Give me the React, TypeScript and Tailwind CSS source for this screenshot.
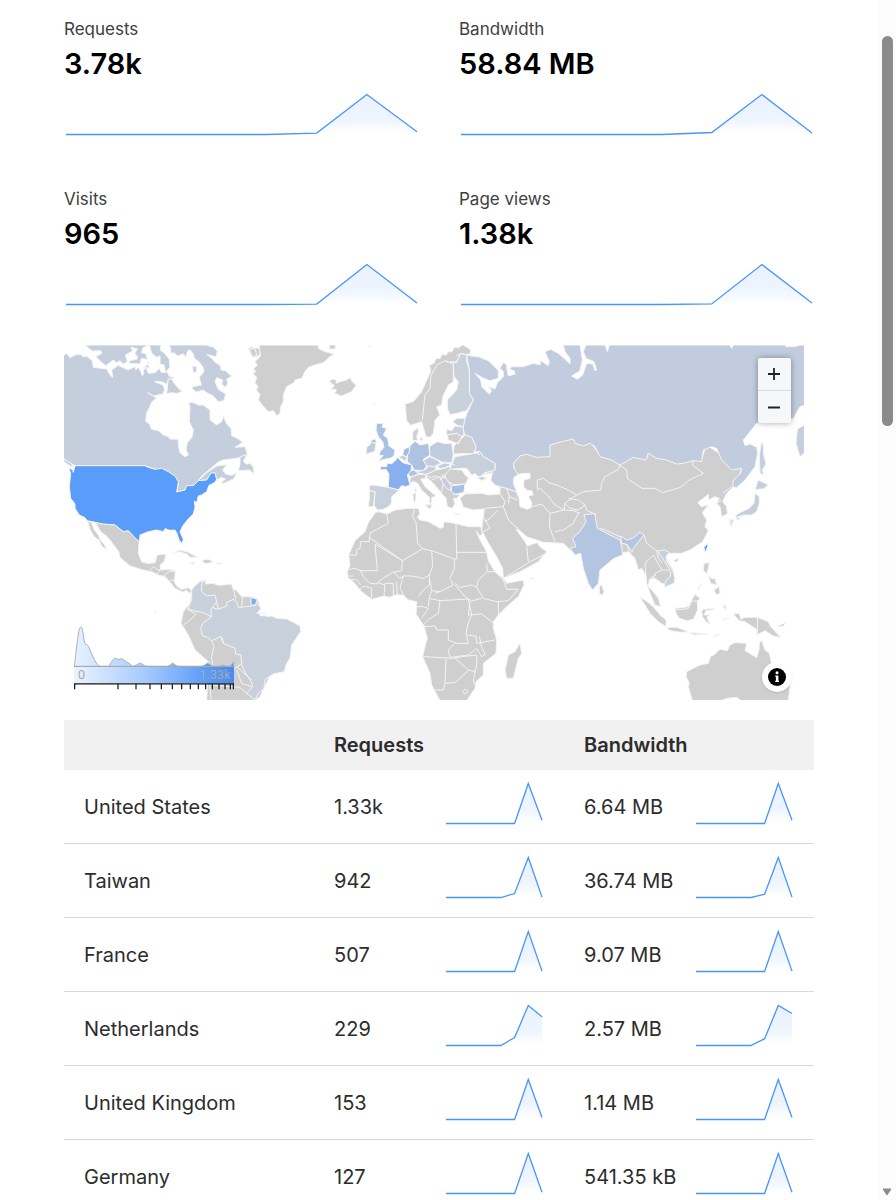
import React from "react";

type Series = number[];

function Sparkline({ id, data, width, label }: { id: string; data: Series; width: number; label: string }) {
  const step = (width - 4) / (data.length - 1);
  const pts = data.map((v, i) => `${(2 + i * step).toFixed(1)},${(42.5 - v * 40).toFixed(1)}`).join(" ");
  return (
    <svg viewBox={`0 0 ${width} 44`} className="block h-11 w-full" preserveAspectRatio="none" role="img" aria-label={label}>
      <defs>
        <linearGradient id={id} x1="0" y1="2" x2="0" y2="42" gradientUnits="userSpaceOnUse">
          <stop offset="0" stopColor="#4693ff" stopOpacity="0.12" />
          <stop offset="0.6" stopColor="#4693ff" stopOpacity="0.1" />
          <stop offset="1" stopColor="#4693ff" stopOpacity="0" />
        </linearGradient>
      </defs>
      <polygon points={`2,42.5 ${pts} ${width - 2},42.5`} fill={`url(#${id})`} />
      <polyline points={pts} fill="none" stroke="#4a95f8" strokeWidth="1.3" />
    </svg>
  );
}

const stats: { label: string; value: string; data: Series }[] = [
  { label: "Requests", value: "3.78k", data: [0, 0, 0, 0, 0, 0.035, 1, 0.07] },
  { label: "Bandwidth", value: "58.84 MB", data: [0, 0, 0, 0, 0, 0.05, 1, 0.04] },
  { label: "Visits", value: "965", data: [0, 0, 0, 0, 0, 0.01, 1, 0.04] },
  { label: "Page views", value: "1.38k", data: [0, 0, 0, 0, 0, 0.015, 1, 0.04] },
];

const rows: { country: string; requests: string; r: Series; bandwidth: string; b: Series }[] = [
  { country: "United States", requests: "1.33k", r: [0, 0, 0, 0, 0, 0, 1, 0.08], bandwidth: "6.64 MB", b: [0, 0, 0, 0, 0, 0, 1, 0.08] },
  { country: "Taiwan", requests: "942", r: [0, 0, 0, 0, 0, 0.1, 1, 0.01], bandwidth: "36.74 MB", b: [0, 0, 0, 0, 0, 0.08, 1, 0.01] },
  { country: "France", requests: "507", r: [0, 0, 0, 0, 0, 0, 1, 0.01], bandwidth: "9.07 MB", b: [0, 0, 0, 0, 0, 0, 1, 0.01] },
  { country: "Netherlands", requests: "229", r: [0, 0, 0, 0, 0, 0.2, 1, 0.72], bandwidth: "2.57 MB", b: [0, 0, 0, 0, 0, 0.17, 1, 0.8] },
  { country: "United Kingdom", requests: "153", r: [0, 0, 0, 0, 0, 0, 1, 0.05], bandwidth: "1.14 MB", b: [0, 0, 0, 0, 0, 0, 1, 0.05] },
  { country: "Germany", requests: "127", r: [0, 0, 0, 0, 0, 0, 1, 0.03], bandwidth: "541.35 kB", b: [0, 0, 0, 0, 0, 0, 1, 0.03] },
];

type Shape = [fill: string, d: string];
type Region = { x: number; y: number; shapes: Shape[]; borders?: string };

const GREY = "#cfcfcf";
const CANADA = "#c5cedd";
const RUSSIA = "#c1ccde";
const PALE = "#c8d0dc";
const SEA = "#ffffff";

// Map units are thirds of a pixel; each region has its own origin.
const regions: Region[] = [
  {
    x: 0,
    y: 0,
    shapes: [
      [CANADA, "M5 50L20 40 30 53 45 45 62 43 68 50 82 50 97 62 100 82 122 85 140 87 145 97 152 107 158 112 155 90 175 76 195 86 205 89 225 80 228 90 233 82 237 85 242 95 247 107 252 100 250 92 258 82 265 100 285 98 298 85 305 98 322 95 328 110 345 112 322 122 324 133 303 125 282 124 310 136 314 150 308 162 280 168 262 158 290 174 275 186 270 200 260 218 257 244 270 254 274 268 295 272 310 285 325 290 330 297 355 298 355 315 360 338 375 350 385 345 378 328 382 308 397 290 400 270 388 245 390 200 385 188 400 188 415 195 430 195 450 210 450 240 470 255 485 245 490 228 500 252 513 265 515 287 535 297 548 307 525 322 555 320 562 342 555 350 530 355 490 360 475 366 455 383 425 408 415 422 440 398 470 378 500 374 488 390 497 402 515 406 530 398 522 416 492 430 482 428 497 417 483 412 471 420 462 396 440 420 415 422 400 437 380 437 375 450 352 457 355 425 340 405 310 388 285 388 255 377 45 377 12 360 5 350Z"],
      [CANADA, "M80 15L82 22 97 33 122 32 125 40 108 50 120 63 137 77 160 60 170 68 180 62 190 72 202 65 196 45 218 33 213 22 232 26 224 40 233 50 230 58 208 62 208 70 240 72 244 55 260 58 268 72 250 82 268 84 258 42 245 38 248 24 265 15Z"],
      [CANADA, "M268 15L275 40 290 52 300 48 300 72 312 75 317 98 330 80 328 58 312 38 300 30 303 15Z"],
      [CANADA, "M328 15L333 30 330 38 345 40 352 48 370 42 378 50 383 32 390 30 400 42 403 55 418 66 430 83 432 95 418 112 424 135 397 140 398 148 410 156 430 150 440 158 460 168 475 185 492 182 497 162 475 148 465 125 470 113 488 120 485 133 496 142 503 130 500 118 515 108 498 93 484 90 480 75 466 68 455 55 440 43 468 50 472 35 462 22 438 15Z"],
      [CANADA, "M397 80L410 78 410 95 400 98ZM325 116L335 118 345 133 357 147 368 154 352 160 332 158 320 162ZM540 350L560 344 550 365 560 373 570 370 580 382 582 402 568 390 535 392 540 374ZM12 356L35 372 40 380 30 378 12 365ZM565 25l12 -5 8 10 -12 12Z"],
      ["#5a9cf9", "M26 384L38 389 40 397 45 377 255 377 262 381 285 388 305 385 325 395 345 408 355 425 350 456 375 450 380 437 400 437 415 422 440 420 453 400 465 398 470 420 460 430 447 436 440 455 425 465 415 468 410 488 403 483 405 500 400 522 382 540 368 558 360 575 370 598 366 610 358 602 350 578 345 570 330 571 315 566 310 575 290 570 265 575 240 585 238 605 225 595 205 573 190 575 165 555 130 553 82 542 75 533 58 525 45 505 45 492 32 475 28 440 32 400Z"],
      [GREY, "M570 30L585 22 600 28 600 45 582 52 572 45Z"],
    ],
  },
  {
    x: 0,
    y: 540,
    shapes: [
      [GREY, "M95 5L130 12 165 15 190 35 205 32 222 50 237 65 235 100 245 125 265 130 285 128 292 105 318 102 312 125 300 135 302 150 330 148 347 153 342 185 352 200 365 208 385 203 395 213 388 220 380 211 368 216 345 205 325 180 315 170 295 165 275 155 250 150 210 138 180 112 176 95 150 60 142 50 122 35 108 10Z"],
      [GREY, "M83 3L95 8 102 28 115 45 122 62 132 72 140 90 125 78 117 60 102 50 90 28Z"],
      [GREY, "M338 98L360 90 385 97 412 112 390 112 382 103 360 95ZM428 128L430 118 448 119 460 127 440 130ZM388 127l18 3 -8 3ZM470 129h16v3h-16Z"],
      [GREY, "M395 210L405 197 420 185 438 180 437 192 460 190 472 195 490 195 515 192 518 205 530 212 545 230 575 230 592 238 603 265 590 280 650 295 700 320 600 530 580 545 440 545 443 480 445 425 405 390 385 345 363 310 370 275 390 250Z"],
      [PALE, "M452 270L455 262 475 268 500 258 500 247 520 238 530 245 535 262 560 260 585 256 592 250 603 265 590 280 612 278 618 290 635 288 650 295 680 297 700 307 720 318 722 335 695 375 690 415 680 430 672 455 640 462 615 478 612 505 595 520 585 540 560 520 578 500 574 485 560 465 552 450 545 432 543 405 527 402 525 385 490 370 482 350 455 362 442 352 427 347 422 325 430 308 450 295Z"],
      [PALE, "M438 180L425 190 425 215 440 228 465 225 470 245 452 270 455 290 430 278 400 272 384 266 395 240 395 210 405 197 420 185Z"],
      ["#82aeee", "M573 232L592 238 586 255 573 255Z"],
      [SEA, "M597 279l18 -1 3 8 -16 2Z"],
      [PALE, "M284 275l4 2 -2 4Z"],
    ],
    borders:
      "M258 130L285 128M270 150L282 140 290 148 302 150M290 165L300 150M310 168L330 152 345 156M330 180L342 182M382 268L408 282 388 302 372 314M455 362L462 380 455 410 458 440 470 460M485 350L490 368M458 438L465 455 485 485 530 440 545 432M530 440L575 480M530 450L545 490 575 500M448 430L455 460 450 500 453 540M453 495L540 502 560 520M470 245L475 268M520 208L528 238M548 230L545 262",
  },
  {
    x: 540,
    y: 0,
    shapes: [
      [GREY, "M57 15L60 35 62 48 45 65 52 75 40 88 48 95 38 100 50 112 45 130 55 140 48 150 60 162 55 180 75 205 85 215 100 212 110 227 120 220 122 200 130 185 130 165 140 140 162 128 165 120 185 115 195 95 205 82 225 75 250 68 270 50 283 42 255 35 235 25 235 15Z"],
      [GREY, "M28 28L45 25 50 45 38 52ZM268 15h18v12h-18ZM268 124L275 118 290 120 288 130 300 125 320 120 330 113 337 125 348 136 335 155 305 168 283 160 290 150 272 146 284 138Z"],
      ["#a9c0e6", "M410 250L430 250 426 262 440 265 430 285 443 295 447 318 465 330 462 348 452 354 415 362 430 347 418 345 420 335 432 322 428 305 415 290 408 270ZM392 303L405 296 410 308 396 310Z"],
      ["#bdcbe0", "M380 322L392 312 393 307 408 310 404 334 378 343Z"],
      ["#88b0ee", "M420 380L440 380 442 370 455 371 468 360 472 352 488 368 515 375 513 392 502 405 510 435 497 440 485 437 475 450 445 442 447 402 438 388 423 390Z"],
      [PALE, "M388 437L400 435 445 442 478 450 455 470 455 488 445 500 430 508 412 510 402 495 405 455 388 452Z"],
      [GREY, "M388 452L405 455 400 500 385 500 388 478ZM475 352L490 345 500 352 498 364ZM518 300L518 275 533 264 535 275 530 290 533 302ZM540 293l8 0 0 10 -8 -4Z"],
      ["#9dbbe9", "M488 345L492 328 508 320 508 335 500 350Z"],
      ["#aec2e2", "M502 345L508 335 510 318 525 303 540 315 565 310 570 345 550 358 560 378 550 392 522 390 515 375 502 365Z"],
      ["#aec2e2", "M505 402L512 393 522 390 535 400 525 406 512 410Z"],
      ["#c1ccde", "M568 320L592 305 610 310 635 310 640 345 635 367 615 370 590 358 570 348Z"],
      ["#c4cede", "M550 362L570 350 592 360 602 370 582 380 560 378ZM590 378L612 370 630 370 628 378 602 386Z"],
      [PALE, "M530 395L555 390 565 378 588 380 585 395 558 403 535 399Z"],
      [GREY, "M510 413L535 403 557 404 557 415 542 418 555 440 572 455 588 468 575 473 575 490 568 488 568 472 545 450 533 430 520 424 510 432ZM555 495L575 492 573 505ZM519 462L528 458 527 483 520 484Z"],
      ["#69a5f5", "M524 447L529 447 527 457Z"],
      [GREY, "M557 404L588 390 602 388 628 380 645 400 645 430 640 462 660 465 650 475 640 475 645 490 637 505 622 500 618 475 605 460 580 430 560 412Z"],
      [GREY, "M495 192L520 185 545 155 558 125 572 95 569 75 582 70 588 55 600 56 606 42 618 46 626 34 636 36 642 22 655 24 668 14 684 24 692 30 690 42 660 45 650 70 640 72 640 125 625 135 608 170 605 195 590 200 600 225 585 240 580 280 570 292 558 290 545 245 530 250 512 256 500 242Z"],
      [GREY, "M385 20l8 -3 -5 5ZM400 190l5 2 -5 2Z"],
    ],
    borders:
      "M547 240L555 165 570 145 572 110 590 75 615 62 640 72M615 62L625 68 650 65 660 45M558 405L570 412 590 408 598 415M575 420L600 410 610 430 605 455M605 405L620 412 640 400",
  },
  {
    x: 840,
    y: 480,
    shapes: [
      [GREY, "M105 38L115 35 142 42 165 30 205 25 235 25 240 40 232 52 240 60 265 65 300 85 310 82 312 65 345 70 385 80 422 80 427 100 420 108 408 92 420 120 440 155 445 182 465 215 490 235 500 250 550 240 552 255 535 290 500 320 475 345 460 365 460 385 470 420 468 460 430 490 430 525 408 545 405 565 380 602 300 602 275 555 270 520 248 470 255 440 262 415 252 378 228 342 230 305 205 300 190 285 165 285 150 292 132 288 95 298 65 275 40 245 25 235 22 215 30 195 26 165 45 122 75 95 85 68Z"],
      [GREY, "M540 430L545 460 535 475 520 535 500 535 495 510 505 465 525 455Z"],
      [GREY, "M568 235h14v2h-14ZM340 40l20 0 -8 4ZM255 15l22 0 -8 12Z"],
    ],
    borders:
      "M140 42L145 70 92 98 88 112 187 182 248 146 233 130 228 68 218 50 222 28M88 112L88 125 62 125 60 145 50 148 50 165 26 165M105 132L112 212 60 212 45 205 28 208M105 132L187 182 185 212 158 217 115 245 112 252 90 250 70 230 62 212M248 146L275 152 278 200 268 225 250 235 215 228 190 228 180 235 160 217M275 152L343 177 343 205 330 235 340 255 300 275 275 272 268 232M348 72L350 157 438 157M350 157L350 177 343 177M440 190L442 215 415 240 410 262 395 255 360 262 345 250M442 215L465 215 490 240 500 268 535 268 505 302 470 305 430 295 410 262M475 345L475 305M345 255L375 290 395 303 425 295M390 303L385 345 425 342 462 370M275 272L268 295 300 302 385 297 395 345 385 368 378 400 385 430 350 430 325 420 325 390 290 390 285 378 252 380M300 302L295 340 270 355 250 375M230 320L248 320 265 325 245 355M268 295L265 320M378 405L408 408 410 430 465 420M418 410L425 440 435 465 425 470 410 445 385 465 330 472 325 450 345 430M250 470L340 475 365 470 410 465 410 495 405 515 385 510 345 475M318 475L315 550 345 548 385 512M405 515L400 545 405 555M315 550L310 570 285 570M190 285L180 265 190 228M172 285L170 245M160 285L160 250 135 250 132 288M115 248L135 255M95 295L95 265 72 258 58 270M28 238L50 240 62 255M40 228L25 228M268 225L268 255 245 275 235 290M368 575L375 567 384 575 376 583ZM300 275L285 280",
  },
  {
    x: 1140,
    y: 0,
    shapes: [
      [GREY, "M220 372L235 343 320 340 330 310 400 290 450 305 480 345 540 370 620 335 700 365 785 355 800 315 845 345 905 385 890 430 875 445 860 460 848 485 860 500 862 522 845 530 840 500 830 490 838 475 825 470 805 480 805 463 773 488 785 500 805 495 787 518 800 540 795 560 805 572 788 605 750 630 725 640 690 640 675 645 680 660 700 690 703 725 685 735 665 730 645 715 628 718 625 740 640 755 655 775 662 800 645 795 630 760 620 730 618 705 605 685 595 690 585 655 565 635 545 640 520 655 480 690 475 730 455 750 445 730 430 680 422 640 405 645 390 630 370 610 335 608 310 607 290 600 260 590 240 572 228 568 255 605 262 618 290 608 300 620 320 635 295 665 240 695 190 715 188 685 170 650 140 600 125 570 130 530 133 507 100 510 70 502 60 475 75 462 130 460 180 462 180 440 200 445 235 455Z"],
      [GREY, "M478 738L485 735 492 755 488 765 478 762Z"],
      [RUSSIA, "M80 45L95 48 115 50 145 62 175 92 175 115 150 122 125 112 105 100 122 120 125 140 148 162 155 152 145 140 165 147 172 128 190 110 190 95 180 85 190 68 198 72 205 108 225 102 222 92 208 88 215 80 250 80 280 70 300 75 302 62 325 77 328 65 315 35 332 28 355 40 372 55 390 72 390 55 375 35 370 15 420 15 427 60 420 92 395 108 412 118 428 105 440 70 458 72 465 92 470 90 462 65 438 55 430 35 438 15 495 15 502 35 508 15 1095 15 1095 195 1080 200 1060 235 950 250 910 300 915 317 930 312 950 322 953 340 945 380 915 420 890 443 878 440 880 420 902 400 905 385 875 390 845 360 830 325 815 320 790 330 785 365 760 362 730 370 710 372 680 360 650 355 625 340 618 360 580 352 540 375 515 360 480 350 465 320 450 310 430 318 405 310 400 297 365 305 330 315 330 350 290 352 260 343 240 348 220 370 222 385 235 405 220 430 235 458 200 445 180 440 150 430 155 410 135 400 165 390 165 370 130 350 120 335 105 335 108 320 95 292 75 285 68 265 75 235 80 222 100 180 88 160 88 90Z"],
      ["#c9d1db", "M62 40L80 45 80 65 88 90 88 160 100 180 80 212 50 220 30 224 22 205 22 180 50 150 55 125 42 110 40 70 30 65 50 68Z"],
      [PALE, "M38 245L50 235 75 235 70 260 52 256ZM20 285L20 268 35 272 45 258 70 262 72 285 62 290 50 280Z"],
      [GREY, "M22 285L50 280 65 290 55 312 25 300ZM40 342L42 318 60 300 75 285 95 292 108 320 103 340Z"],
      [PALE, "M30 385L45 350 75 345 105 340 120 335 130 350 165 370 165 390 135 398 120 410 95 405 80 385 62 385 32 388Z"],
      [GREY, "M15 405L30 387 65 390 78 408 85 412 78 432 40 434 20 422Z"],
      ["#a9c0e6", "M33 438L76 432 72 457 45 463 35 455Z"],
      ["#c4cede", "M2 415L15 412 34 438 30 452 15 440Z"],
      [SEA, "M72 455L75 435 88 412 105 400 118 418 140 412 130 405 158 398 150 418 165 435 180 445 175 462 145 465 120 458 95 460Z"],
      [PALE, "M112 412L128 410 140 414 125 422Z"],
      [SEA, "M220 430L222 412 238 402 255 400 270 400 270 415 252 420 250 438 262 452 275 452 280 464 265 468 275 488 275 502 262 508 240 500 238 478 230 455Z"],
      ["#b3c5e1", "M432 525L465 520 468 545 472 565 500 580 540 600 545 622 548 645 522 655 480 690 475 730 458 750 445 730 430 685 422 640 405 645 390 625 408 620 398 595 420 575 438 545Z"],
      ["#b3c5e1", "M542 588L560 600 578 595 600 577 612 585 595 605 580 625 577 635 567 622 558 612 545 610Z"],
      [PALE, "M652 633L675 630 688 638 678 650 680 665 698 690 705 715 702 730 672 742 678 722 692 708 690 690 668 655Z"],
    ],
    borders:
      "M80 45L62 40 48 48 M540 375L535 388 495 410 485 430 482 450 430 455 410 465 375 490 372 510 345 495 325 468 300 445 292 450 292 420 310 415 330 430 350 435 385 450 410 465M540 375L560 390 562 415 605 445 645 445 668 458 722 442 745 422 790 400 757 375 760 362M375 490L390 505 415 510 435 495 415 480 385 475M435 495L440 510 468 525M278 500L305 492 330 520 328 560 345 605M330 520L372 510 400 512 420 520M345 575L370 570 400 550 415 520M480 565L500 572 540 590M135 505L190 500 205 540 240 572M190 500L195 485 180 462M200 445L208 470 232 480M208 470L205 490M135 545L150 535 175 510M130 530L150 565 130 575M190 715L215 700 270 665 320 640M265 665L260 620M612 585L620 610 650 632M560 612L575 650M618 705L615 670 640 645 665 690 645 700 640 715M665 690L690 690M650 630L655 655 668 670M830 490L845 480M848 460L875 440M0 370L15 365 45 375M18 400L0 420M100 335L120 345",
  },
  {
    x: 1680,
    y: 0,
    shapes: [
      [CANADA, "M552 255L532 268 528 310 540 350 556 335 556 255ZM425 305L430 315 430 340 438 372 427 390 432 405 420 400 418 345ZM415 420L445 435 430 447 418 447 405 450ZM405 460L418 470 418 490 410 515 395 525 370 525 350 532 345 528 365 515 385 507 402 490ZM328 538L342 540 335 560 330 552ZM350 532l12 2 -10 8Z"],
      [SEA, "M327 12h15l-7 13ZM495 12h50l-20 8 -28 0Z"],
    ],
  },
  {
    x: 1740,
    y: 540,
    shapes: [
      ["#5a9cf9", "M192 82L203 70 203 80 196 98Z"],
      [PALE, "M270 0h10l-4 15Z"],
      [GREY, "M140 455L180 435 205 430 212 408 222 405 240 388 262 392 270 375 285 368 320 370 315 392 350 413 357 390 358 370 365 360 375 390 388 400 395 430 420 450 440 475 450 500 445 545 308 545 290 532 262 535 235 545 158 545 145 500 148 490 138 470Z"],
      [GREY, "M0 233L15 240 40 260 60 285 78 300 78 320 55 305 30 280 15 255ZM80 322L110 322 145 335 125 337 90 332ZM105 265L125 263 145 260 155 240 165 223 180 234 172 246 173 270 160 298 140 302 118 295 108 280ZM190 268L222 265 225 268 198 272 192 285 210 285 200 292 210 312 198 305 188 290 185 275ZM192 130L208 128 205 145 200 162 190 150ZM222 210L238 200 240 220 228 224ZM102 120L115 115 115 122 105 127ZM172 208l15 -20 -12 22ZM205 165l10 12 10 -2 5 20 -18 -5ZM280 282L298 280 302 298 315 292 352 292 385 305 392 320 422 352 400 348 375 332 350 345 350 328 315 305 298 302ZM412 318L438 308 428 320ZM220 352l20 -10 -15 3ZM148 338l30 2 25 2 -40 3ZM250 255l8 2 0 15 -5 -8ZM245 298l25 -4 -18 5Z"],
    ],
    borders: "M352 292V348M106 270L145 266 155 244 175 242M30 175L48 165",
  },
];

const ticks = [44, 174, 228, 270, 304, 337, 365, 391, 415, 437, 457, 477, 495, 511, 520];

function WorldMap() {
  return (
    <div className="relative w-full max-w-[740px]">
      <svg viewBox="12 15 2220 1065" className="block w-full" role="img" aria-label="Requests by country">
        <defs>
          <linearGradient id="scale" x1="0" x2="1">
            <stop offset="0" stopColor="#ebf3fe" />
            <stop offset="0.45" stopColor="#a4cafd" />
            <stop offset="0.8" stopColor="#5f9ff8" />
            <stop offset="1" stopColor="#478bf0" />
          </linearGradient>
          <linearGradient id="density" x1="42" x2="522" y1="0" y2="0" gradientUnits="userSpaceOnUse">
            <stop offset="0" stopColor="#e8f2ff" />
            <stop offset="0.45" stopColor="#a4cafd" />
            <stop offset="1" stopColor="#3f80df" />
          </linearGradient>
        </defs>
        {regions.map((r) => (
          <g key={`${r.x}-${r.y}`} transform={`translate(${r.x} ${r.y})`} strokeLinejoin="round">
            {r.shapes.map(([fill, d]) => (
              <path key={d} d={d} fill={fill} stroke="#f4f5f6" strokeWidth="3" />
            ))}
            {r.borders && <path d={r.borders} fill="none" stroke="#f4f4f4" strokeWidth="3" />}
          </g>
        ))}
        <g transform="translate(0 540)">
          <path
            d="M43 439C48 405 54 322 62 321S70 362 75 371Q82 373 86 380C95 404 110 438 121 439H145C152 434 157 415 167 415 175 420 180 418 186 416 193 420 200 428 208 430Q212 436 218 439 230 437 236 431 242 427 248 433 254 439 262 439H322Q332 436 338 429 345 436 354 439H425Q436 436 443 429 450 436 460 439H478L490 436 498 439H508Q516 437 521 425V439Z"
            fill="url(#density)"
            stroke="#a9b0ba"
            strokeWidth="3"
          />
          <rect x="42" y="439" width="480" height="50" fill="url(#scale)" />
          <path d="M42 439.500H522" stroke="#a9a9a9" strokeWidth="3" />
          <path d={`M42 491.500H522${ticks.map((t) => `M${t} 491V508`).join("")}`} stroke="#111" strokeWidth="3.600" fill="none" />
          <text x="54" y="477" fontSize="38" fill="#a9a9a9" className="font-['Roboto',sans-serif]">0</text>
          <text x="511" y="477" fontSize="38" textAnchor="end" fill="#a9a9a9" className="font-['Roboto',sans-serif]">1.33k</text>
        </g>
      </svg>
      <div className="absolute top-[13px] right-[13px] flex w-[33px] flex-col overflow-hidden rounded-xs bg-[#f6f7f9] shadow-[0_0_6px_rgba(0,0,0,0.35)]">
        <button type="button" aria-label="Zoom in" className="flex h-[33px] items-center justify-center border-b border-[#d9dadc]">
          <svg viewBox="0 0 13 13" className="size-[13px]"><path d="M0 6H12M6 0V12" stroke="#222" strokeWidth="1.800" /></svg>
        </button>
        <button type="button" aria-label="Zoom out" className="flex h-8 items-center justify-center">
          <svg viewBox="0 0 13 13" className="size-[13px]"><path d="M0 6.500H12" stroke="#222" strokeWidth="1.800" /></svg>
        </button>
      </div>
      <button type="button" aria-label="Map information" className="absolute right-3 bottom-2 flex size-[30px] items-center justify-center rounded-full bg-white shadow-[0_1px_2px_rgba(0,0,0,0.12)]">
        <svg viewBox="0 0 18 18" className="size-[18px]">
          <circle cx="9" cy="9" r="9" fill="#000" />
          <circle cx="9" cy="4.800" r="1.500" fill="#fff" />
          <path d="M7.300 7.500H10.400V12.700H11V14H7.200V12.700H7.900V8.800H7.300Z" fill="#fff" />
        </svg>
      </button>
    </div>
  );
}

function Measure({ id, text, data, label }: { id: string; text: string; data: Series; label: string }) {
  return (
    <div className="flex items-center justify-between">
      <span>{text}</span>
      <div className="w-[100px] pb-2">
        <Sparkline id={id} data={data} width={100} label={label} />
      </div>
    </div>
  );
}

export default function App() {
  return (
    <div className="flex h-screen overflow-hidden bg-white font-['Inter',sans-serif] text-[#2c2c2c]">
      <main className="min-w-0 flex-1 pt-4 pr-16 pl-16">
        <section className="grid grid-cols-2 gap-x-10">
          {stats.map((s, i) => (
            <div key={s.label} className="h-[170px]">
              <h2 className="text-[17px] leading-[26px] font-normal text-[#404040]">{s.label}</h2>
              <p className="mt-1 mb-2.5 text-[29px] leading-9 font-semibold text-black">{s.value}</p>
              <Sparkline id={`stat-${i}`} data={s.data} width={355} label={`${s.label} trend`} />
            </div>
          ))}
        </section>
        <section className="-mt-[11px]">
          <WorldMap />
        </section>
        <table className="mt-5 w-full table-fixed border-separate border-spacing-0 text-left text-[20px] leading-7">
          <thead>
            <tr className="h-[50px] bg-[#f1f1f1]">
              <th className="px-5" aria-label="Country" />
              <th className="px-5 font-semibold">Requests</th>
              <th className="px-5 font-semibold">Bandwidth</th>
            </tr>
          </thead>
          <tbody>
            {rows.map((r, i) => (
              <tr key={r.country} className="h-[74px]">
                <td className="border-b border-[#d9d9d9] px-5">{r.country}</td>
                <td className="border-b border-[#d9d9d9] px-5">
                  <Measure id={`req-${i}`} text={r.requests} data={r.r} label={`${r.country} requests trend`} />
                </td>
                <td className="border-b border-[#d9d9d9] px-5">
                  <Measure id={`bw-${i}`} text={r.bandwidth} data={r.b} label={`${r.country} bandwidth trend`} />
                </td>
              </tr>
            ))}
          </tbody>
        </table>
      </main>
      <div aria-hidden="true" className="flex w-[18px] shrink-0 flex-col items-center bg-[#fcfcfc] pt-9">
        <div className="h-[390px] w-[11px] rounded-full bg-[#8b8b8b]" />
        <svg viewBox="0 0 10 8" className="mt-auto mb-1 h-2 w-2.5"><path d="M1 1H9L5 7Z" fill="#8b8b8b" stroke="#8b8b8b" strokeLinejoin="round" /></svg>
      </div>
    </div>
  );
}
